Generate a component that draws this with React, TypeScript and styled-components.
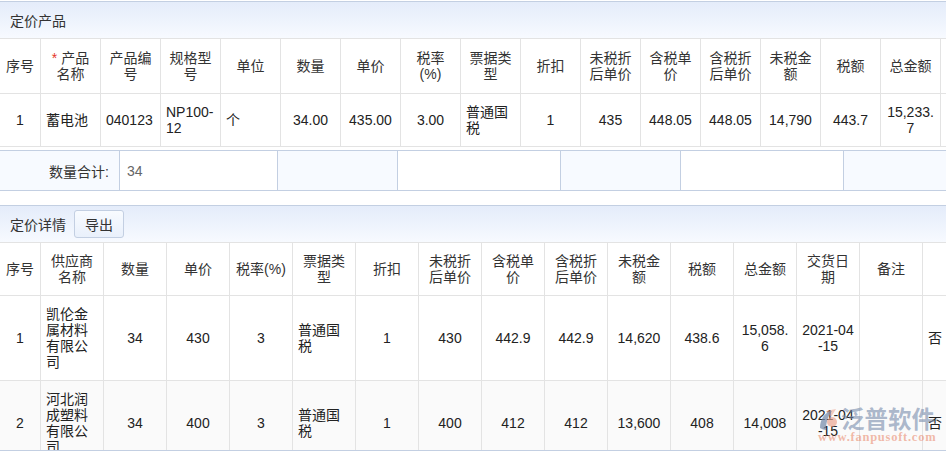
import React from "react";
import styled, { createGlobalStyle } from "styled-components";

const Global = createGlobalStyle`
  html, body { margin: 0; padding: 0; background: #fff; }
  body { font-family: "Liberation Sans", "Noto Sans CJK SC", sans-serif; font-size: 14px; color: #333; }
`;

const Page = styled.div`
  position: relative;
  width: 946px;
  height: 451px;
  padding-top: 1px;
  box-sizing: border-box;
  overflow: hidden;
`;

const PanelHeader = styled.div`
  display: flex;
  align-items: center;
  gap: 8px;
  height: 37px;
  box-sizing: border-box;
  padding-left: 10px;
  border-top: 1px solid #c3cfe2;
  background: linear-gradient(#e4ecfa, #f7faff);
  font-size: 14px;
  color: #333;
`;

const ExportButton = styled.button`
  width: 50px;
  height: 28px;
  padding: 0;
  border: 1px solid #c3cfe2;
  border-radius: 3px;
  background: linear-gradient(#f8fbff, #e9f0fb);
  font: inherit;
  font-size: 14px;
  color: #333;
`;

const TableClip = styled.div<{ $height: number }>`
  height: ${(p) => p.$height}px;
  overflow: hidden;
  border-bottom: ${(p) => (p.$height > 150 ? "2px solid #c3cfe2" : "none")};
`;

const Table = styled.table<{ $width: number }>`
  table-layout: fixed;
  width: ${(p) => p.$width}px;
  border-collapse: separate;
  border-spacing: 0;
  font-size: 14px;
  line-height: 16px;
`;

const HeadRow = styled.tr<{ $height: number }>`
  height: ${(p) => p.$height}px;
`;

const Row = styled.tr<{ $height: number; $alt?: boolean }>`
  height: ${(p) => p.$height}px;
  background: ${(p) => (p.$alt ? "#fafafa" : "#fff")};
`;

const Th = styled.th`
  box-sizing: border-box;
  padding: 0 5px;
  border-top: 1px solid #e3e3e3;
  border-right: 1px solid #e3e3e3;
  border-bottom: 1px solid #e3e3e3;
  font-weight: 400;
  text-align: center;
  word-break: break-all;
  color: #333;
  &:last-child { border-right: none; }
`;

const Td = styled.td<{ $left?: boolean }>`
  box-sizing: border-box;
  padding: 0 5px;
  border-right: 1px solid #e3e3e3;
  border-bottom: 1px solid #e3e3e3;
  text-align: ${(p) => (p.$left ? "left" : "center")};
  word-break: break-all;
  color: #222;
  overflow: hidden;
  &:last-child { border-right: none; }
`;

const Star = styled.span`
  color: #e5352b;
  margin-right: 4px;
`;

const Summary = styled.div`
  display: grid;
  grid-template-columns: 120px 158px 120px 163px 120px 163px 1fr;
  height: 41px;
  box-sizing: border-box;
  margin-top: 3px;
  margin-bottom: 14px;
  border-top: 1px solid #c3cfe2;
  border-bottom: 1px solid #c3cfe2;
`;

const SummaryCell = styled.div<{ $tint?: boolean }>`
  display: flex;
  align-items: center;
  justify-content: flex-end;
  box-sizing: border-box;
  padding-right: 10px;
  border-right: 1px solid #c3cfe2;
  background: ${(p) => (p.$tint ? "#f7faff" : "#fff")};
  &:last-child { border-right: none; }
`;

const SummaryValue = styled(SummaryCell)`
  justify-content: flex-start;
  padding: 0 0 0 7px;
  color: #666;
`;

const Watermark = styled.div`
  position: absolute;
  left: 817px;
  top: 405px;
  width: 125px;
  height: 44px;
  pointer-events: none;
`;

const WatermarkLogo = styled.svg`
  position: absolute;
  left: 0;
  top: 3px;
`;

const WatermarkName = styled.div`
  position: absolute;
  left: 24px;
  top: 0;
  font-size: 23.5px;
  line-height: 30px;
  font-weight: 700;
  white-space: nowrap;
  color: rgba(120, 140, 172, 0.62);
`;

const WatermarkUrl = styled.div`
  position: absolute;
  left: 1px;
  top: 25px;
  font-family: "Liberation Serif", serif;
  font-size: 12.5px;
  line-height: 14px;
  font-weight: 700;
  letter-spacing: 0.75px;
  white-space: nowrap;
  color: rgba(232, 128, 96, 0.55);
`;

const Cols = ({ first, rest, n }: { first: number; rest: number; n: number }) => (
  <colgroup>
    <col width={first} />
    {Array.from({ length: n }).map((_, i) => (
      <col key={i} width={rest} />
    ))}
  </colgroup>
);

const head1 = ["序号", "", "产品编号", "规格型号", "单位", "数量", "单价", "税率(%)", "票据类型", "折扣", "未税折后单价", "含税单价", "含税折后单价", "未税金额", "税额", "总金额", ""];
const row1: [string, boolean][] = [
  ["1", false], ["蓄电池", true], ["040123", true], ["NP100-12", true], ["个", true], ["34.00", false], ["435.00", false], ["3.00", false], ["普通国税", true], ["1", false], ["435", false], ["448.05", false], ["448.05", false], ["14,790", false], ["443.7", false], ["15,233.7", false], ["", false],
];
const head2 = ["序号", "供应商名称", "数量", "单价", "税率(%)", "票据类型", "折扣", "未税折后单价", "含税单价", "含税折后单价", "未税金额", "税额", "总金额", "交货日期", "备注", ""];
const rows2 = [
  ["1", "凯伦金属材料有限公司", "34", "430", "3", "普通国税", "1", "430", "442.9", "442.9", "14,620", "438.6", "15,058.6", "2021-04-15", "", "否"],
  ["2", "河北润成塑料有限公司", "34", "400", "3", "普通国税", "1", "400", "412", "412", "13,600", "408", "14,008", "2021-04-15", "", "否"],
];
const leftCols2 = new Set([1, 5, 15]);

export default function App() {
  return (
    <Page>
      <Global />
      <PanelHeader>定价产品</PanelHeader>
      <TableClip $height={109}>
        <Table $width={1001}>
          <Cols first={41} rest={60} n={16} />
          <thead>
            <HeadRow $height={56}>
              {head1.map((h, i) => (
                <Th key={i}>
                  {i === 1 ? (
                    <>
                      <Star>*</Star>产品名称
                    </>
                  ) : (
                    h
                  )}
                </Th>
              ))}
            </HeadRow>
          </thead>
          <tbody>
            <Row $height={53}>
              {row1.map(([v, left], i) => (
                <Td key={i} $left={left}>
                  {v}
                </Td>
              ))}
            </Row>
          </tbody>
        </Table>
      </TableClip>
      <Summary>
        <SummaryCell $tint>数量合计:</SummaryCell>
        <SummaryValue>34</SummaryValue>
        <SummaryCell $tint />
        <SummaryCell />
        <SummaryCell $tint />
        <SummaryCell />
        <SummaryCell $tint />
      </Summary>
      <PanelHeader>
        定价详情
        <ExportButton>导出</ExportButton>
      </PanelHeader>
      <TableClip $height={208}>
        <Table $width={986}>
          <Cols first={41} rest={63} n={15} />
          <thead>
            <HeadRow $height={54}>
              {head2.map((h, i) => (
                <Th key={i}>{h}</Th>
              ))}
            </HeadRow>
          </thead>
          <tbody>
            {rows2.map((r, ri) => (
              <Row key={ri} $height={85} $alt={ri === 1}>
                {r.map((v, i) => (
                  <Td key={i} $left={leftCols2.has(i)}>
                    {v}
                  </Td>
                ))}
              </Row>
            ))}
          </tbody>
        </Table>
      </TableClip>
      <Watermark>
        <WatermarkLogo width="24" height="26" viewBox="0 0 24 26">
          <path d="M9 3 L19 1 L14 9 Z" fill="#e9a08a" opacity="0.55" />
          <path d="M3 20 C3 11 8 4 15 3 C11 8 9 14 9 22 C7 22 5 21 3 20 Z" fill="#7186a6" opacity="0.7" />
          <circle cx="15" cy="14" r="5" fill="#e9a08a" opacity="0.65" />
        </WatermarkLogo>
        <WatermarkName>泛普软件</WatermarkName>
        <WatermarkUrl>www.fanpusoft.com</WatermarkUrl>
      </Watermark>
    </Page>
  );
}
